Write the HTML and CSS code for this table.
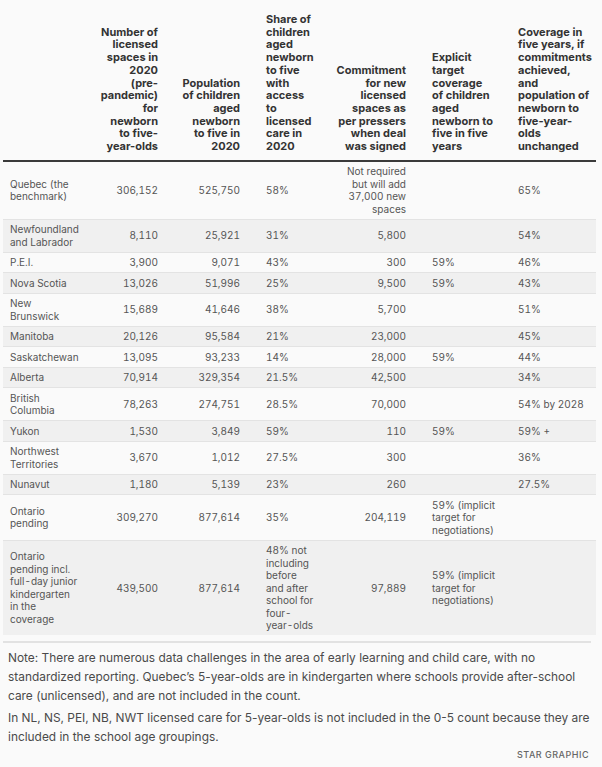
FILE: index.html
```html
<!DOCTYPE html>
<html lang="en">
<head>
<meta charset="utf-8">
<title>Child care coverage</title>
<link rel="stylesheet" href="styles.css">
</head>
<body>
<div class="wrap">
  <table class="data">
    <colgroup>
      <col class="w1"><col class="w2"><col class="w3"><col class="w4"><col class="w5"><col class="w6"><col class="w7">
    </colgroup>
    <thead>
      <tr>
        <th class="c1"></th>
        <th class="r">Number of<br>licensed<br>spaces in<br>2020<br>(pre-<br>pandemic)<br>for<br>newborn<br>to five-<br>year-olds</th>
        <th class="r">Population<br>of children<br>aged<br>newborn<br>to five in<br>2020</th>
        <th class="l">Share of<br>children<br>aged<br>newborn<br>to five<br>with<br>access<br>to<br>licensed<br>care in<br>2020</th>
        <th class="r">Commitment<br>for new<br>licensed<br>spaces as<br>per pressers<br>when deal<br>was signed</th>
        <th class="l">Explicit<br>target<br>coverage<br>of children<br>aged<br>newborn to<br>five in five<br>years</th>
        <th class="l">Coverage in<br>five years, if<br>commitments<br>achieved,<br>and<br>population of<br>newborn to<br>five-year-<br>olds<br>unchanged</th>
      </tr>
    </thead>
    <tbody>
      <tr><td class="c1">Quebec (the<br>benchmark)</td><td class="r">306,152</td><td class="r">525,750</td><td class="l">58%</td><td class="r">Not required<br>but will add<br>37,000 new<br>spaces</td><td class="l"></td><td class="l">65%</td></tr>
      <tr><td class="c1">Newfoundland<br>and Labrador</td><td class="r">8,110</td><td class="r">25,921</td><td class="l">31%</td><td class="r">5,800</td><td class="l"></td><td class="l">54%</td></tr>
      <tr><td class="c1">P.E.I.</td><td class="r">3,900</td><td class="r">9,071</td><td class="l">43%</td><td class="r">300</td><td class="l">59%</td><td class="l">46%</td></tr>
      <tr><td class="c1">Nova Scotia</td><td class="r">13,026</td><td class="r">51,996</td><td class="l">25%</td><td class="r">9,500</td><td class="l">59%</td><td class="l">43%</td></tr>
      <tr><td class="c1">New<br>Brunswick</td><td class="r">15,689</td><td class="r">41,646</td><td class="l">38%</td><td class="r">5,700</td><td class="l"></td><td class="l">51%</td></tr>
      <tr><td class="c1">Manitoba</td><td class="r">20,126</td><td class="r">95,584</td><td class="l">21%</td><td class="r">23,000</td><td class="l"></td><td class="l">45%</td></tr>
      <tr><td class="c1">Saskatchewan</td><td class="r">13,095</td><td class="r">93,233</td><td class="l">14%</td><td class="r">28,000</td><td class="l">59%</td><td class="l">44%</td></tr>
      <tr><td class="c1">Alberta</td><td class="r">70,914</td><td class="r">329,354</td><td class="l">21.5%</td><td class="r">42,500</td><td class="l"></td><td class="l">34%</td></tr>
      <tr><td class="c1">British<br>Columbia</td><td class="r">78,263</td><td class="r">274,751</td><td class="l">28.5%</td><td class="r">70,000</td><td class="l"></td><td class="l">54% by 2028</td></tr>
      <tr><td class="c1">Yukon</td><td class="r">1,530</td><td class="r">3,849</td><td class="l">59%</td><td class="r">110</td><td class="l">59%</td><td class="l">59% +</td></tr>
      <tr><td class="c1">Northwest<br>Territories</td><td class="r">3,670</td><td class="r">1,012</td><td class="l">27.5%</td><td class="r">300</td><td class="l"></td><td class="l">36%</td></tr>
      <tr><td class="c1">Nunavut</td><td class="r">1,180</td><td class="r">5,139</td><td class="l">23%</td><td class="r">260</td><td class="l"></td><td class="l">27.5%</td></tr>
      <tr><td class="c1">Ontario<br>pending</td><td class="r">309,270</td><td class="r">877,614</td><td class="l">35%</td><td class="r">204,119</td><td class="l">59% (implicit<br>target for<br>negotiations)</td><td class="l"></td></tr>
      <tr><td class="c1">Ontario<br>pending incl.<br>full-day junior<br>kindergarten<br>in the<br>coverage</td><td class="r">439,500</td><td class="r">877,614</td><td class="l">48% not<br>including<br>before<br>and after<br>school for<br>four-<br>year-olds</td><td class="r">97,889</td><td class="l">59% (implicit<br>target for<br>negotiations)</td><td class="l"></td></tr>
    </tbody>
  </table>
  <div class="notes">
    <p>Note: There are numerous data challenges in the area of early learning and child care, with no<br>standardized reporting. Quebec’s 5-year-olds are in kindergarten where schools provide after-school<br>care (unlicensed), and are not included in the count.</p>
    <p>In NL, NS, PEI, NB, NWT licensed care for 5-year-olds is not included in the 0-5 count because they are<br>included in the school age groupings.</p>
  </div>
  <div class="credit">STAR GRAPHIC</div>
</div>
</body>
</html>
```

FILE: styles.css
```css
html, body {
  margin: 0;
  padding: 0;
  background: #fafafa;
}

body {
  font-family: Inter, "Noto Sans", "Liberation Sans", sans-serif;
  color: #555;
}

.wrap {
  padding: 9px 6px 0 3px;
}

.data {
  width: 593px;
  table-layout: fixed;
  border-collapse: collapse;
}

.w1 { width: 92px; }
.w2 { width: 76px; }
.w3 { width: 82px; }
.w4 { width: 77px; }
.w5 { width: 89px; }
.w6 { width: 86px; }
.w7 { width: 91px; }

.data th {
  font-size: 11px;
  font-weight: 700;
  line-height: 12.7px;
  color: #333;
  vertical-align: bottom;
  padding-top: 4px;
  padding-bottom: 7px;
  border-bottom: 2px solid #3a3a3a;
  white-space: nowrap;
}

.data td {
  font-size: 10px;
  font-variant-numeric: tabular-nums;
  line-height: 12.5px;
  color: #555;
  vertical-align: middle;
  padding-top: 3.5px;
  padding-bottom: 3.5px;
  border-top: 1px solid #e3e3e3;
  white-space: nowrap;
  background: #fafafa;
}

.data tbody tr:nth-child(even) td {
  background: #f0f0f0;
}

.data .c1 {
  text-align: left;
  padding-left: 7px;
  padding-right: 4px;
}

.data .r {
  text-align: right;
  padding-left: 4px;
  padding-right: 13px;
}

.data .l {
  text-align: left;
  padding-left: 13px;
  padding-right: 4px;
}

.notes {
  width: 588px;
  margin-top: 6px;
  border-top: 2px solid #e2e2e2;
  padding: 5px 0 0 5px;
  box-sizing: border-box;
  font-size: 11.9px;
  line-height: 19px;
  color: #4a4a4a;
}

.notes p {
  margin: 0 0 3px;
  white-space: nowrap;
}

.credit {
  width: 586px;
  text-align: right;
  font-size: 9px;
  font-weight: 500;
  letter-spacing: 0.5px;
  color: #666;
  margin-top: 0;
}
```
